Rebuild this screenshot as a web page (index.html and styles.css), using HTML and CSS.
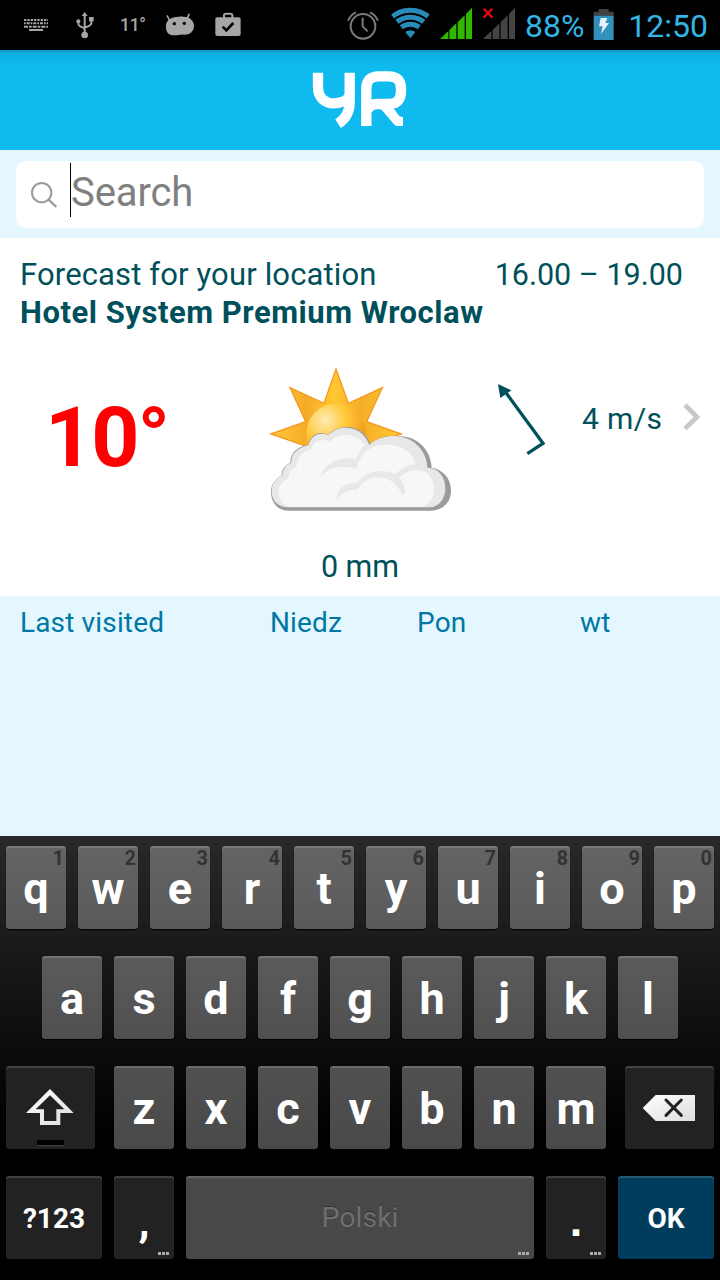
FILE: index.html
```html
<!DOCTYPE html>
<html lang="en">
<head>
<meta charset="utf-8">
<title>YR</title>
<link rel="stylesheet" href="styles.css">
</head>
<body>
<div class="phone">
  <div class="status">
    <div class="status-left">
      <svg class="status-notes" viewBox="0 0 360 150">
        <g stroke="#a6a6a6" fill="none" stroke-width="6">
          <path d="M72 60H144" stroke-dasharray="7 3"/>
          <path d="M72 70H144" stroke-dasharray="5 3 9 3"/>
          <path d="M72 80H144" stroke-dasharray="12 3 8 3"/>
          <path d="M87 90H129"/>
          <path d="M254 46V100M235 65V72Q235 78 254 85M274 58V69Q274 77 254 83" stroke-width="6"/>
        </g>
        <g fill="#a6a6a6"><path d="M254 36L263 48H245Z"/><circle cx="254" cy="105" r="10"/><circle cx="235" cy="64" r="6"/><path d="M267 51H281V64H267Z"/></g>
      </svg>
      <span class="status-temp">11°</span>
      <svg class="status-apps" viewBox="480 0 260 150">
        <path d="M508 60L502 48M561 58L567 43" stroke="#a6a6a6" stroke-width="5" stroke-linecap="round"/>
        <path d="M498 82C496 65 507 51 537 50C563 48 581 58 582 77C583 95 567 105 551 104C540 102 538 106 523 106C507 107 498 98 498 82Z" fill="#a6a6a6"/>
        <circle cx="523" cy="71" r="5"/><circle cx="553" cy="70" r="5"/>
        <path d="M672 54V46Q672 41 678 41H691Q697 41 697 46V54" fill="none" stroke="#a6a6a6" stroke-width="6"/>
        <rect x="646" y="52" width="76" height="56" rx="6" fill="#a6a6a6"/>
        <path d="M668 80L679 91L700 69" fill="none" stroke="#000" stroke-width="8"/>
      </svg>
    </div>
    <div class="status-right">
      <svg class="status-signal" viewBox="0 0 540 150">
        <g fill="none" stroke="#7b7b7b" stroke-width="6"><circle cx="69" cy="79" r="37"/><path d="M68 53V79L83 94"/><path d="M24 62Q32 44 48 37M114 62Q106 44 90 37"/></g>
        <clipPath id="fan"><path d="M211 115L147 36V15H275V36Z"/></clipPath>
        <g clip-path="url(#fan)" fill="none" stroke="#298bb7"><circle cx="211" cy="117" r="86" stroke-width="15"/><circle cx="211" cy="117" r="65" stroke-width="15"/><circle cx="211" cy="117" r="44" stroke-width="15"/><circle cx="211" cy="117" r="13" stroke-width="26"/></g>
        <path d="M300 117L325 93V117ZM328 90L349 70V117H328ZM353 67L374 46V117H353ZM378 42L396 23V117H378Z" fill="#30b800"/>
        <path d="M429 117L454 93V117ZM458 90L478 70V117H458ZM482 67L503 46V117H482ZM507 42L525 23V117H507Z" fill="#444"/>
        <path d="M431 26L457 53M457 26L431 53" stroke="#d90b0b" stroke-width="7"/>
      </svg>
      <span class="status-text status-percent">88%</span>
      <svg class="status-battery" viewBox="760 0 66 150">
        <path d="M762 47V35H777V27H807V35H822V47Z" fill="#424242"/><path d="M762 47H822V120H762Z" fill="#3291ba"/><path d="M783 54H803L797 69H808L784 102L789 79H778Z" fill="#e5f3fa"/>
      </svg>
      <span class="status-text status-clock">12:50</span>
    </div>
  </div>

  <header class="brand">
    <svg class="logo" viewBox="0 0 420 300" role="img" aria-label="YR">
      <g fill="none" stroke="#fff" stroke-width="31">
        <path d="M84 68V112C84 142 104 160 131 160C150 160 170 152 179 140"/>
        <path d="M179 68V155C179 185 165 208 144 221"/>
        <path d="M229 228V116Q229 79 266 79H296Q333 79 333 116V124Q333 162 296 162H262Q240 162 232 180"/>
      </g>
      <path d="M270 174L308 172L328 198Q331 201 339 201V228H321Q316 228 312 223Z" fill="#fff"/>
    </svg>
  </header>

  <div class="search">
    <div class="search-field">
      <svg class="search-icon" viewBox="90 90 84 90"><circle cx="125" cy="128" r="29" fill="none" stroke="#999b9e" stroke-width="6"/><path d="M145 148L169 171" stroke="#999b9e" stroke-width="7"/></svg>
      <span class="caret"></span>
      <span class="placeholder">Search</span>
    </div>
  </div>

  <main class="forecast">
    <div class="forecast-head"><span class="lead">Forecast for your location</span><span class="hours">16.00 – 19.00</span></div>
    <div class="place">Hotel System Premium Wroclaw</div>
    <div class="weather">
      <div class="temp">10°</div>
      <svg class="sky" viewBox="0 0 600 510">
        <defs>
          <radialGradient id="sun" cx="195" cy="195" r="125" gradientUnits="userSpaceOnUse"><stop offset="0" stop-color="#ffeab5"/><stop offset=".5" stop-color="#ffca3a"/><stop offset="1" stop-color="#f59a1d"/></radialGradient>
          <linearGradient id="ray"><stop offset="0" stop-color="#ffca38"/><stop offset=".27" stop-color="#f5ab27"/><stop offset=".48" stop-color="#ffc831"/><stop offset=".7" stop-color="#f5ad28"/><stop offset="1" stop-color="#ffc934"/></linearGradient>
        </defs>
        <path d="M33 237L137 200L90 98L192 145L228 42L265 145L367 98L320 200L424 237L320 274H140Z" fill="url(#ray)" stroke="#f7991e" stroke-width="4"/>
        <circle cx="228" cy="235" r="89" fill="url(#sun)"/>
        <path d="M85 467C50 466 33 440 33 410C34 385 48 370 65 362C64 345 75 330 91 324C90 295 110 275 145 270C150 240 175 226 205 239C225 218 250 215 265 216C304 219 325 246 331 268C355 246 385 240 415 243C475 243 513 287 515 338C550 344 573 370 573 407C573 445 545 467 510 467Z" fill="#9b9b9b"/>
        <path d="M85 457C55 457 35 437 35 410C35 385 48 370 67 362C68 345 75 330 94 324C92 298 110 280 146 270C152 244 177 228 205 241C225 221 247 217 265 219C299 222 318 244 328 270C350 248 380 243 405 243C460 245 500 285 502 338C535 338 556 365 556 400C556 433 535 457 510 457Z" fill="#e8e8e8"/>
        <path d="M99 456C72 456 56 436 56 410C57 386 72 375 85 371C85 352 97 341 110 337C109 308 125 289 153 285C158 260 183 246 209 261C236 230 290 232 314 270C301 282 293 301 287 315C248 302 194 319 181 367C206 337 240 327 288 343C298 297 328 271 374 269C424 267 460 294 468 327C440 329 420 343 407 358C370 338 315 348 291 385C260 379 229 402 231 434C246 411 267 401 292 405C321 351 401 353 426 420C440 422 443 402 418 369C429 355 448 347 470 346C502 345 522 370 522 402C522 434 502 456 475 456Z" fill="#f7f7f7"/>
      </svg>
      <svg class="wind-arrow" viewBox="0 0 240 300"><path d="M74 63L189 220L142 251" fill="none" stroke="#00505b" stroke-width="10"/><path d="M54 42L94 61L61 84Z" fill="#00505b"/></svg>
      <span class="wind">4 m/s</span>
      <svg class="chevron" viewBox="600 90 72 100"><path d="M615 105L651 141L615 176" fill="none" stroke="#c7c7cc" stroke-width="14"/></svg>
    </div>
    <div class="rain">0 mm</div>
  </main>

  <section class="visited">
    <span>Last visited</span><span>Niedz</span><span>Pon</span><span>wt</span>
  </section>

  <div class="keyboard">
    <div class="row">
      <div class="key k1"><i>1</i>q</div><div class="key k1"><i>2</i>w</div><div class="key k1"><i>3</i>e</div><div class="key k1"><i>4</i>r</div><div class="key k1"><i>5</i>t</div><div class="key k1"><i>6</i>y</div><div class="key k1"><i>7</i>u</div><div class="key k1"><i>8</i>i</div><div class="key k1"><i>9</i>o</div><div class="key k1"><i>0</i>p</div>
    </div>
    <div class="row">
      <div class="key k2">a</div><div class="key k2">s</div><div class="key k2">d</div><div class="key k2">f</div><div class="key k2">g</div><div class="key k2">h</div><div class="key k2">j</div><div class="key k2">k</div><div class="key k2">l</div>
    </div>
    <div class="row row-shift">
      <div class="key dark wide"><svg class="key-icon" viewBox="18 48 267 249">
        <defs><linearGradient id="metal" x2="1" y2="1"><stop stop-color="#fff"/><stop offset="1" stop-color="#ddd"/></linearGradient></defs>
        <path d="M150 117L221 189H181V225H120V189H78ZM150 136L107 178H132V213H169V178H193Z" fill="url(#metal)" fill-rule="evenodd"/><path d="M111 270H192V286H111Z"/><path d="M111 287H192" stroke="#444" stroke-width="3"/></svg></div>
      <div class="letters"><div class="key k3">z</div><div class="key k3">x</div><div class="key k3">c</div><div class="key k3">v</div><div class="key k3">b</div><div class="key k3">n</div><div class="key k3">m</div></div>
      <div class="key dark wide"><svg class="key-icon" viewBox="375 48 267 249"><path d="M428 174L467 135H585V213H467Z" fill="url(#metal)"/><path d="M498 150L544 196M544 150L498 196" stroke="#222" stroke-width="9" stroke-linecap="round"/></svg></div>
    </div>
    <div class="row">
      <div class="key dark mode">?123</div><div class="key dark punct">,<b class="more"></b></div><div class="key space">Polski<b class="more"></b></div><div class="key dark punct stop">.<b class="more"></b></div><div class="key ok">OK</div>
    </div>
  </div>
</div>
</body>
</html>
```

FILE: styles.css
```css
* { box-sizing: border-box; }
body { margin: 0; background: #000; font-family: Roboto, "Noto Sans", sans-serif; }
svg { display: block; flex: none; }
.phone { width: 720px; height: 1280px; display: flex; flex-direction: column; background: #e4f7fe; overflow: hidden; }

.status { height: 50px; flex: none; background: #000; display: flex; justify-content: space-between; }
.status-left, .status-right { display: flex; white-space: nowrap; }
.status-notes { width: 120px; height: 50px; }
.status-temp { width: 40px; color: #a6a6a6; font-size: 17.5px; line-height: 51px; font-weight: 500; letter-spacing: -.3px; }
.status-apps { width: 86.67px; height: 50px; }
.status-signal { width: 180px; height: 50px; }
.status-text { color: #33b5e5; font-size: 32px; line-height: 52px; }
.status-percent { width: 73.3px; padding-left: 5px; }
.status-battery { width: 22px; height: 50px; }
.status-clock { width: 104.7px; padding-left: 13px; }

.brand { height: 100px; flex: none; background: linear-gradient(#0b96c2, #0fb0e3 4px, #0fbaef 18px); display: flex; padding-left: 290px; }
.logo { width: 140px; height: 100px; }

.search { height: 88px; flex: none; padding: 11px 16px 10px; }
.search-field { height: 67px; background: #fff; border-radius: 9px; display: flex; align-items: flex-start; padding: 2px 14px; }
.search-icon { width: 28px; height: 30px; margin-top: 17px; }
.caret { width: 1px; height: 54px; background: #000; margin-left: 12px; }
.placeholder { color: #808080; font-size: 40px; line-height: 60px; letter-spacing: -.1px; }

.forecast { height: 358px; flex: none; background: #fff; color: #00505b; font-size: 30px; padding-top: 18px; }
.forecast-head { display: flex; justify-content: space-between; padding: 0 37px 0 20px; line-height: 38px; }
.lead { font-size: 31px; letter-spacing: .14px; }
.hours { font-size: 30.5px; }
.place { padding-left: 20px; font-size: 31px; line-height: 38px; font-weight: 700; letter-spacing: .53px; }
.weather { height: 170px; margin-top: 23px; display: flex; align-items: center; }
.temp { width: 260px; padding-left: 45px; color: #f00; font-size: 84px; font-weight: 700; line-height: 100px; letter-spacing: -2px; margin-bottom: 5px; }
.sky { width: 200px; height: 170px; }
.wind-arrow { width: 80px; height: 100px; margin: 0 22px 40px 20px; }
.wind { width: 98px; margin-bottom: 44px; letter-spacing: .4px; }
.chevron { width: 24px; height: 33.3px; margin-bottom: 46px; }
.rain { text-align: center; line-height: 38px; margin-top: 23px; font-size: 30.5px; }

.visited { height: 240px; flex: none; display: grid; grid-template-columns: 250px 147px 163px auto; padding: 9px 0 0 20px; color: #0078a5; font-size: 28px; line-height: 36px; letter-spacing: .15px; }

.keyboard { height: 444px; flex: none; background: linear-gradient(#292929, #000 300px); padding: 10px 6px 0; display: flex; flex-direction: column; gap: 27px; }
.row { display: flex; justify-content: center; gap: 12px; }
.row-shift { justify-content: space-between; }
.letters { display: flex; gap: 12px; }
.key { position: relative; width: 60px; height: 83px; flex: none; border-radius: 3px; color: #fff; font-size: 45px; font-weight: 700; line-height: 85px; text-align: center; box-shadow: inset 0 2px 1px rgba(255,255,255,.15), 0 1px 1px #000; }
.key i { position: absolute; top: 0; right: 2px; font-size: 20px; line-height: 24px; font-style: normal; color: #333; }
.k1 { background: linear-gradient(#646464, #5a5a5a); }
.k2 { background: linear-gradient(#5b5b5b, #505050); }
.k3 { background: linear-gradient(#515151, #494949); }
.dark { background: #222; }
.wide { width: 89px; }
.key-icon { width: 89px; height: 83px; }
.mode, .ok { width: 96px; font-size: 28px; }
.space { width: 348px; background: #484848; color: #6e6e6e; font-size: 28.5px; line-height: 84px; font-weight: 400; text-shadow: 0 -1px #333; }
.ok { background: #003d5c; }
.punct { padding-top: 2px; }
.stop { font-family: "Liberation Sans", Arial, sans-serif; }
.more { position: absolute; right: 5px; bottom: 4px; width: 11px; height: 3px; background: repeating-linear-gradient(90deg, #aaa 0 3px, transparent 3px 4px); }
```
